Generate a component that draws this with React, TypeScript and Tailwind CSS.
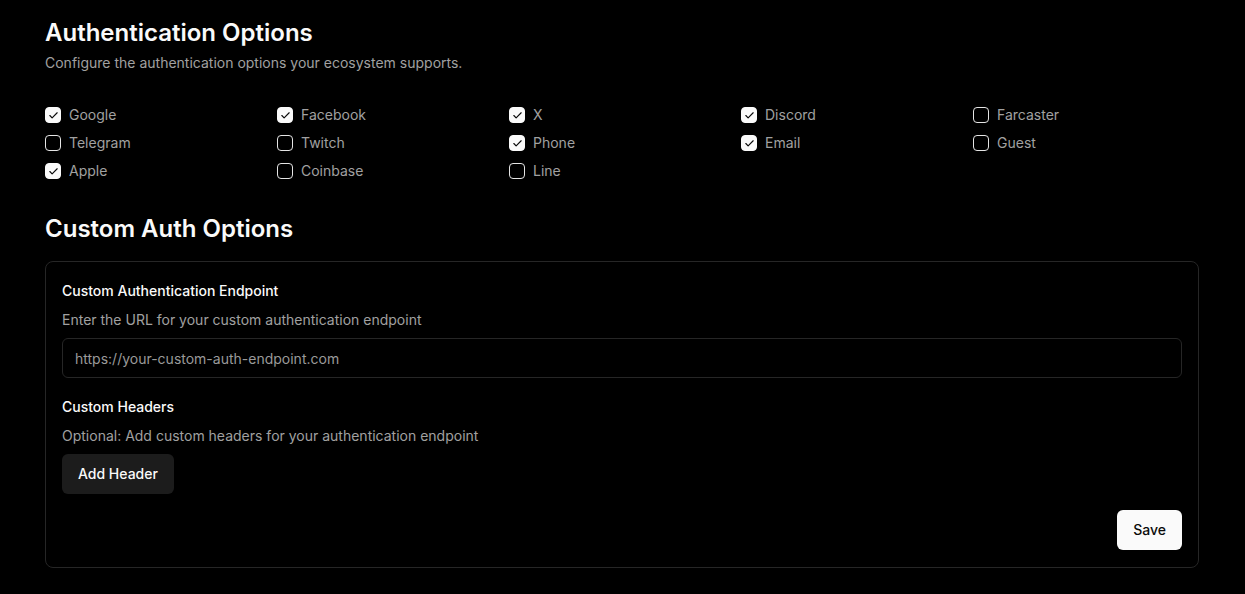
import React from "react";

const options: { label: string; checked: boolean }[] = [
  { label: "Google", checked: true },
  { label: "Facebook", checked: true },
  { label: "X", checked: true },
  { label: "Discord", checked: true },
  { label: "Farcaster", checked: false },
  { label: "Telegram", checked: false },
  { label: "Twitch", checked: false },
  { label: "Phone", checked: true },
  { label: "Email", checked: true },
  { label: "Guest", checked: false },
  { label: "Apple", checked: true },
  { label: "Coinbase", checked: false },
  { label: "Line", checked: false },
];

function Check({ checked }: { checked: boolean }) {
  return (
    <span
      className={
        checked
          ? "flex h-4 w-4 shrink-0 items-center justify-center rounded-[4px] border border-[#fafafa] bg-[#fafafa]"
          : "flex h-4 w-4 shrink-0 items-center justify-center rounded-[4px] border border-[#e5e5e5]"
      }
    >
      {checked && (
        <svg width="11" height="11" viewBox="0 0 24 24" fill="none" stroke="#0a0a0a" strokeWidth="2.5" strokeLinecap="round" strokeLinejoin="round">
          <path d="M20 6 9 17l-5-5" />
        </svg>
      )}
    </span>
  );
}

export default function App() {
  return (
    <div className="min-h-screen bg-black pl-[45px] pr-[46px] pt-[17px] pb-6 text-[#fafafa]" style={{ fontFamily: "Inter, 'Noto Sans', sans-serif" }}>
      <h1 className="text-2xl font-semibold leading-8">Authentication Options</h1>
      <p className="mt-1 text-sm leading-5 text-[#a1a1a1]">Configure the authentication options your ecosystem supports.</p>

      <div className="mt-8 grid grid-cols-5 gap-x-1.5 gap-y-2">
        {options.map((o) => (
          <label key={o.label} className="flex items-center gap-2">
            <Check checked={o.checked} />
            <span className="text-sm leading-5 text-[#a1a1a1]">{o.label}</span>
          </label>
        ))}
      </div>

      <h2 className="mt-8 text-2xl font-semibold leading-8">Custom Auth Options</h2>

      <div className="mt-4 rounded-lg border border-[#262626] px-4 pt-[19px] pb-[17px]">
        <div className="text-sm font-medium leading-5">Custom Authentication Endpoint</div>
        <p className="mt-[9px] text-sm leading-5 text-[#a1a1a1]">Enter the URL for your custom authentication endpoint</p>
        <div className="mt-2 flex h-10 items-center rounded-md border border-[#262626] px-3 pt-0.5">
          <span className="text-sm text-[#9a9a9a]">https://your-custom-auth-endpoint.com</span>
        </div>

        <div className="mt-[19px] text-sm font-medium leading-5">Custom Headers</div>
        <p className="mt-[9px] text-sm leading-5 text-[#a1a1a1]">Optional: Add custom headers for your authentication endpoint</p>
        <button className="mt-2 h-10 rounded-md bg-[#1c1c1c] px-4 text-sm font-medium text-[#fafafa]">Add Header</button>

        <div className="mt-4 flex justify-end">
          <button className="h-10 rounded-md bg-[#fafafa] px-4 text-sm font-medium text-[#0a0a0a]">Save</button>
        </div>
      </div>
    </div>
  );
}
